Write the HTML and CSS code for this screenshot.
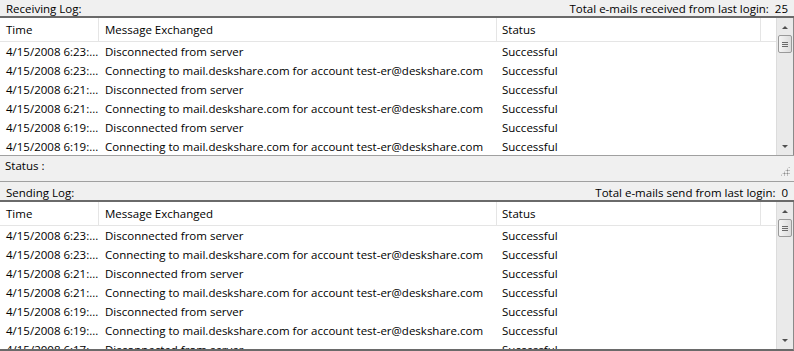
FILE: index.html
```html
<!DOCTYPE html>
<html>
<head>
<meta charset="utf-8">
<link rel="stylesheet" href="styles.css">
</head>
<body>
<div class="app">
  <div class="sec-head">
    <span>Receiving Log:</span>
    <span>Total e-mails received from last login:&nbsp; 25</span>
  </div>
  <div class="list short">
    <div class="table">
      <div class="row head"><div class="c t">Time</div><div class="c m">Message Exchanged</div><div class="c s">Status</div><div class="c x"></div></div>
      <div class="row"><div class="c t">4/15/2008 6:23:...</div><div class="c m">Disconnected from server</div><div class="c s">Successful</div></div>
      <div class="row"><div class="c t">4/15/2008 6:23:...</div><div class="c m">Connecting to mail.deskshare.com for account test-er@deskshare.com</div><div class="c s">Successful</div></div>
      <div class="row"><div class="c t">4/15/2008 6:21:...</div><div class="c m">Disconnected from server</div><div class="c s">Successful</div></div>
      <div class="row"><div class="c t">4/15/2008 6:21:...</div><div class="c m">Connecting to mail.deskshare.com for account test-er@deskshare.com</div><div class="c s">Successful</div></div>
      <div class="row"><div class="c t">4/15/2008 6:19:...</div><div class="c m">Disconnected from server</div><div class="c s">Successful</div></div>
      <div class="row"><div class="c t">4/15/2008 6:19:...</div><div class="c m">Connecting to mail.deskshare.com for account test-er@deskshare.com</div><div class="c s">Successful</div></div>
    </div>
    <div class="sb">
      <div class="arr up"></div>
      <div class="track"><div class="thumb"><span></span><span></span><span></span></div></div>
      <div class="arr dn"></div>
    </div>
  </div>
  <div class="statusbar">
    <span>Status :</span>
    <div class="grip"></div>
  </div>
  <div class="sec-head second">
    <span>Sending Log:</span>
    <span>Total e-mails send from last login:&nbsp; 0</span>
  </div>
  <div class="list tall">
    <div class="table">
      <div class="row head"><div class="c t">Time</div><div class="c m">Message Exchanged</div><div class="c s">Status</div><div class="c x"></div></div>
      <div class="row"><div class="c t">4/15/2008 6:23:...</div><div class="c m">Disconnected from server</div><div class="c s">Successful</div></div>
      <div class="row"><div class="c t">4/15/2008 6:23:...</div><div class="c m">Connecting to mail.deskshare.com for account test-er@deskshare.com</div><div class="c s">Successful</div></div>
      <div class="row"><div class="c t">4/15/2008 6:21:...</div><div class="c m">Disconnected from server</div><div class="c s">Successful</div></div>
      <div class="row"><div class="c t">4/15/2008 6:21:...</div><div class="c m">Connecting to mail.deskshare.com for account test-er@deskshare.com</div><div class="c s">Successful</div></div>
      <div class="row"><div class="c t">4/15/2008 6:19:...</div><div class="c m">Disconnected from server</div><div class="c s">Successful</div></div>
      <div class="row"><div class="c t">4/15/2008 6:19:...</div><div class="c m">Connecting to mail.deskshare.com for account test-er@deskshare.com</div><div class="c s">Successful</div></div>
      <div class="row"><div class="c t">4/15/2008 6:17:...</div><div class="c m">Disconnected from server</div><div class="c s">Successful</div></div>
    </div>
    <div class="sb">
      <div class="arr up"></div>
      <div class="track"><div class="thumb"><span></span><span></span><span></span></div></div>
      <div class="arr dn"></div>
    </div>
  </div>
</div>
</body>
</html>
```
FILE: styles.css
```css
html, body {
  margin: 0;
  padding: 0;
  background: #f0f0f0;
}
body {
  font-family: "Open Sans", "Noto Sans", sans-serif;
  font-size: 11.5px;
  color: #000;
  overflow: hidden;
}
.app {
  width: 794px;
  height: 351px;
  display: flex;
  flex-direction: column;
  overflow: hidden;
}
.sec-head {
  height: 15px;
  padding: 1px 6px 0 6px;
  display: flex;
  justify-content: space-between;
  align-items: flex-start;
  line-height: 16px;
  border-bottom: 2px solid #6a6a6a;
  flex: none;
}
.sec-head.second {
  border-top: 1px solid #a0a0a0;
  height: 14px;
  padding-top: 4px;
  line-height: 14px;
}
.list {
  display: flex;
  background: #fff;
  border-right: 1px solid #8a8a8a;
  overflow: hidden;
  flex: none;
}
.list.short { height: 137px; }
.list.tall { height: 147px; border-bottom: 2px solid #6a6a6a; }
.table {
  flex: 1;
  min-width: 0;
  overflow: hidden;
}
.row {
  display: grid;
  grid-template-columns: 99px 398px 264px 14px;
  height: 19px;
  line-height: 19px;
}
.row.head {
  height: 23px;
  line-height: 23px;
  border-bottom: 1px solid #e5e5e5;
}
.c {
  white-space: nowrap;
  overflow: hidden;
  text-overflow: ellipsis;
  padding-left: 6px;
}
.row.head .c { border-right: 1px solid #e5e5e5; }
.row.head .c.x { border-right: none; }
.c.s { padding-left: 5px; }
.sb {
  width: 16px;
  flex: none;
  display: flex;
  flex-direction: column;
  background: #eaeaea;
  border-left: 1px solid #dcdcdc;
}
.arr {
  height: 17px;
  flex: none;
  position: relative;
}
.arr::after {
  content: "";
  position: absolute;
  left: 5px;
  width: 0;
  height: 0;
  border-left: 3px solid transparent;
  border-right: 3px solid transparent;
}
.arr.up::after { top: 8px; border-bottom: 3px solid #505050; }
.arr.dn::after { top: 7px; border-top: 3px solid #505050; }
.track { flex: 1; }
.thumb {
  margin: 0 1px;
  height: 18px;
  border: 1px solid #9a9a9a;
  border-radius: 2px;
  background: linear-gradient(to right, #f4f4f4, #dcdcdc);
  display: flex;
  flex-direction: column;
  align-items: center;
  justify-content: center;
  gap: 1px;
  box-sizing: border-box;
}
.thumb span {
  width: 6px;
  height: 1px;
  background: #6a6a6a;
}
.statusbar {
  height: 23px;
  padding: 2px 4px 0 5px;
  border-top: 1px solid #a0a0a0;
  display: flex;
  justify-content: space-between;
  align-items: flex-start;
  line-height: 16px;
  flex: none;
}
.grip {
  width: 10px;
  height: 10px;
  margin-top: 8px;
  background-image: radial-gradient(circle, #8a8a8a 0.9px, transparent 1.1px);
  background-size: 3px 3px;
  clip-path: polygon(100% 0, 100% 100%, 0 100%);
}
```
